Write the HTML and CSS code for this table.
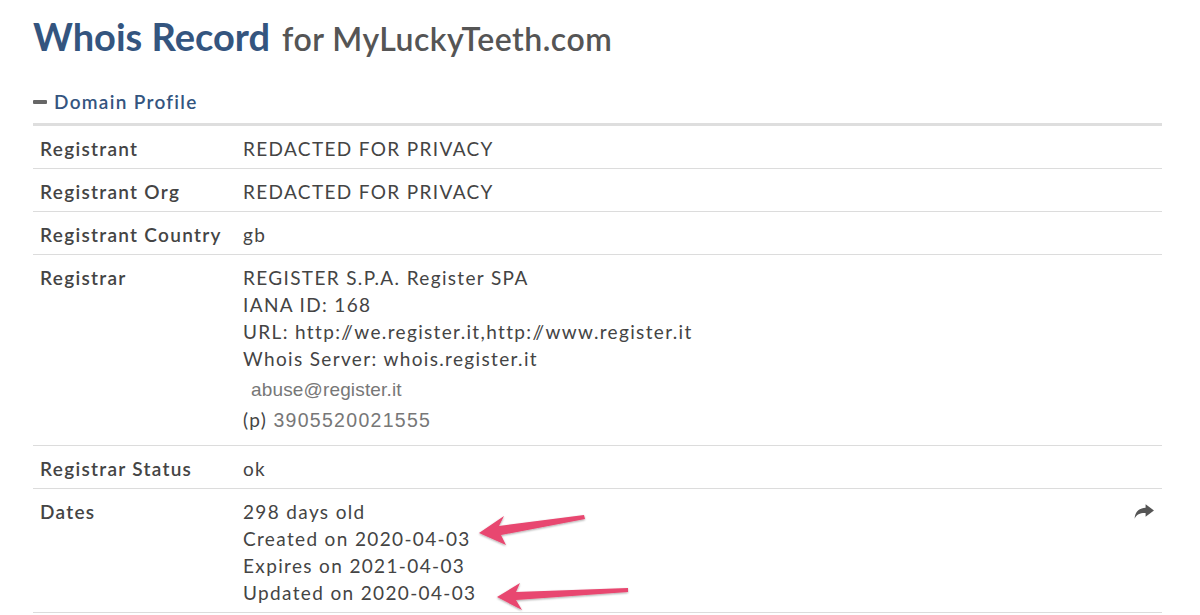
FILE: index.html
```html
<!DOCTYPE html>
<html>
<head>
<meta charset="utf-8">
<link rel="stylesheet" href="styles.css">
</head>
<body>
<div class="page">
  <h1 class="title"><span class="title-main">Whois Record</span> <span class="title-sub">for MyLuckyTeeth.com</span></h1>
  <div class="section-head"><span class="dash"></span>Domain Profile</div>
  <div class="table">
    <div class="row">
      <div class="label">Registrant</div>
      <div class="value">REDACTED FOR PRIVACY</div>
    </div>
    <div class="row">
      <div class="label">Registrant Org</div>
      <div class="value">REDACTED FOR PRIVACY</div>
    </div>
    <div class="row">
      <div class="label">Registrant Country</div>
      <div class="value">gb</div>
    </div>
    <div class="row">
      <div class="label">Registrar</div>
      <div class="value">
        <div>REGISTER S.P.A. Register SPA</div>
        <div>IANA ID: 168</div>
        <div>URL: http:<span class="sl">/</span>/we.register.it,http:<span class="sl">/</span>/www.register.it</div>
        <div>Whois Server: whois.register.it</div>
        <div class="email">abuse@register.it</div>
        <div class="phone"><span class="p">(p)</span> <span class="img-text">3905520021555</span></div>
      </div>
    </div>
    <div class="row">
      <div class="label">Registrar Status</div>
      <div class="value">ok</div>
    </div>
    <div class="row">
      <div class="label">Dates</div>
      <div class="value">
        <div>298 days old</div>
        <div>Created on 2020-04-03</div>
        <div>Expires on 2021-04-03</div>
        <div>Updated on 2020-04-03</div>
      </div>
      <div class="share">
        <svg width="23" height="19" viewBox="0 0 22 18"><path d="M13 2 L21 8 L13 14 V10.5 C8 10.3 4.5 11.5 2.5 16 C2.8 9.5 6.5 5.8 13 5.4 Z" fill="#555"/></svg>
      </div>
    </div>
  </div>
</div>
<svg class="annot" width="1200" height="615" viewBox="0 0 1200 615">
  <defs>
    <filter id="sh" x="-20%" y="-50%" width="140%" height="200%">
      <feGaussianBlur in="SourceAlpha" stdDeviation="1.2"/>
      <feOffset dx="0" dy="1" result="b"/>
      <feComponentTransfer><feFuncA type="linear" slope="0.35"/></feComponentTransfer>
      <feMerge><feMergeNode/><feMergeNode in="SourceGraphic"/></feMerge>
    </filter>
  </defs>
  <polygon filter="url(#sh)" fill="#e8476f" points="479,533 504,516 499,526 584,515 585,519 501,535 506,545"/>
  <polygon filter="url(#sh)" fill="#e8476f" points="497,597 520,583 516,592 628,588 628,592 516,600 522,610"/>
</svg>
</body>
</html>
```
FILE: styles.css
```css
html, body {
  margin: 0;
  padding: 0;
  background: #fff;
}
body {
  font-family: "Lato", "Open Sans", sans-serif;
  color: #444;
  position: relative;
  width: 1200px;
  height: 615px;
  overflow: hidden;
}
.page {
  padding: 14px 38px 0 33px;
}
.title {
  margin: 0;
  font-size: 37px;
  font-weight: 700;
  line-height: 44px;
}
.title-main {
  font-size: 38px;
  color: #34557f;
}
.title-sub {
  font-size: 32px;
  color: #555;
  font-weight: 600;
  letter-spacing: 0.5px;
  margin-left: 3px;
}
.section-head {
  margin-top: 30px;
  font-size: 19px;
  line-height: 22px;
  font-weight: 600;
  color: #34557f;
  letter-spacing: 1.3px;
  display: flex;
  align-items: center;
}
.dash {
  width: 14px;
  height: 4px;
  background: #666;
  margin-right: 7px;
  border-radius: 1px;
}
.table {
  margin-top: 10px;
  border-top: 3px solid #dedede;
}
.row {
  display: flex;
  border-bottom: 1px solid #dcdcdc;
  padding: 9px 0 6px 0;
  position: relative;
}
.label {
  width: 203px;
  padding-left: 7px;
  font-size: 19px;
  line-height: 27px;
  font-weight: 600;
  letter-spacing: 1.3px;
  color: #444;
}
.value {
  flex: 1;
  font-size: 19px;
  line-height: 27px;
  letter-spacing: 1.35px;
  color: #444;
}
.sl {
  letter-spacing: -5.5px;
}
.email {
  height: 35px;
  line-height: 36px;
  padding-left: 8px;
  font-family: "Liberation Sans", Arial, sans-serif;
  font-size: 19px;
  color: #777;
  letter-spacing: 0.15px;
}
.phone {
  height: 26px;
  line-height: 26px;
  margin-bottom: 6px;
}
.img-text {
  font-family: "Liberation Sans", Arial, sans-serif;
  font-size: 19.5px;
  color: #777;
  letter-spacing: 1.3px;
}
.share {
  position: absolute;
  right: 7px;
  top: 13px;
}
.annot {
  position: absolute;
  left: 0;
  top: 0;
  pointer-events: none;
}
```
